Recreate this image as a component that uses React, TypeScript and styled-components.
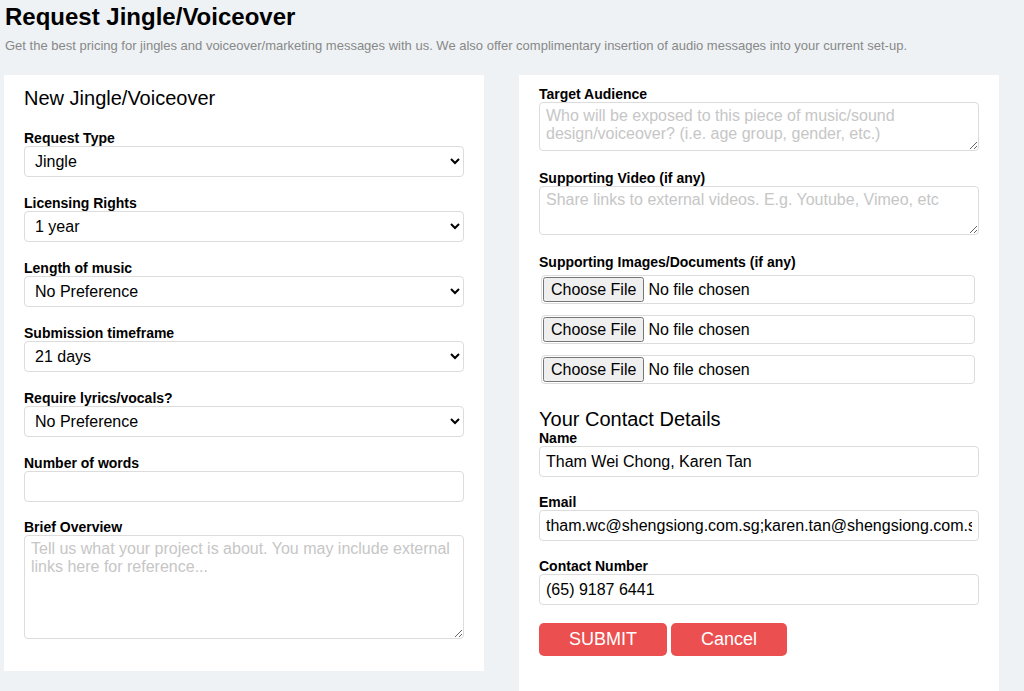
import React from 'react';
import styled, { createGlobalStyle } from 'styled-components';

const GlobalStyle = createGlobalStyle`
  html, body {
    margin: 0;
    padding: 0;
    background: #eef2f5;
    font-family: "Liberation Sans", Arial, sans-serif;
    color: #000;
  }
  * {
    box-sizing: border-box;
  }
`;

const Page = styled.div`
  padding: 3px 4px 0 4px;
  height: 691px;
  overflow: hidden;
`;

const Title = styled.h1`
  margin: 0 0 0 1px;
  font-size: 24px;
  line-height: 27px;
  font-weight: bold;
`;

const Subtitle = styled.p`
  margin: 8px 0 22px 1px;
  font-size: 13px;
  line-height: 15px;
  color: #888;
`;

const Columns = styled.div`
  display: grid;
  grid-template-columns: 480px 480px;
  column-gap: 35px;
  align-items: start;
`;

const Card = styled.section<{ $tall?: boolean }>`
  background: #fff;
  padding: 12px 20px ${({ $tall }) => ($tall ? '60px' : '14px')} 20px;
`;

const CardHeading = styled.h2<{ $gap?: number }>`
  margin: 0 0 ${({ $gap }) => $gap ?? 0}px 0;
  font-size: 20px;
  line-height: 23px;
  font-weight: normal;
`;

const Label = styled.label`
  display: block;
  font-size: 14px;
  line-height: 15px;
  font-weight: bold;
`;

const fieldBase = `
  display: block;
  width: 100%;
  font-family: "Liberation Sans", Arial, sans-serif;
  font-size: 16px;
  color: #000;
  background: #fff;
  border: 1px solid #dcdcdc;
  border-radius: 4px;
  outline: none;
`;

const Select = styled.select`
  ${fieldBase}
  height: 31px;
  padding: 0 6px;
  margin-bottom: 19px;
`;

const TextInput = styled.input`
  ${fieldBase}
  height: 31px;
  padding: 0 6px;
  margin-bottom: 18px;
`;

const TextArea = styled.textarea<{ $rows: number; $after?: number }>`
  ${fieldBase}
  height: ${({ $rows }) => $rows}px;
  padding: 4px 6px;
  line-height: 18px;
  margin: 0 0 ${({ $after }) => $after ?? 20}px 0;
  resize: vertical;

  &::placeholder {
    color: #c6c6c6;
  }
`;

const FileInput = styled.input`
  display: block;
  width: calc(100% - 6px);
  height: 29px;
  margin: 0 0 11px 2px;
  padding: 1px 1px;
  font-family: "Liberation Sans", Arial, sans-serif;
  font-size: 16px;
  border: 1px solid #dcdcdc;
  border-radius: 4px;
  background: #fff;

  &::file-selector-button {
    font-family: "Liberation Sans", Arial, sans-serif;
    font-size: 16px;
    height: 25px;
    padding: 0 6px;
    margin-right: 4px;
  }
`;

const FileGroup = styled.div`
  padding-top: 5px;
  margin-bottom: 24px;
`;

const Buttons = styled.div`
  display: flex;
  gap: 4px;
`;

const ActionButton = styled.button`
  height: 33px;
  padding: 0 30px;
  font-family: "Liberation Sans", Arial, sans-serif;
  font-size: 18px;
  color: #fff;
  background: #eb4f4f;
  border: none;
  border-radius: 5px;
  cursor: pointer;
`;

const selects = [
  { label: 'Request Type', value: 'Jingle', options: ['Jingle', 'Voiceover', 'Sound Design'] },
  { label: 'Licensing Rights', value: '1 year', options: ['1 year', '2 years', 'Perpetual'] },
  { label: 'Length of music', value: 'No Preference', options: ['No Preference', '15 seconds', '30 seconds', '60 seconds'] },
  { label: 'Submission timeframe', value: '21 days', options: ['7 days', '14 days', '21 days'] },
  { label: 'Require lyrics/vocals?', value: 'No Preference', options: ['No Preference', 'Yes', 'No'] },
];

export default function App() {
  return (
    <>
      <GlobalStyle />
      <Page>
        <Title>Request Jingle/Voiceover</Title>
        <Subtitle>
          Get the best pricing for jingles and voiceover/marketing messages with us. We also offer
          complimentary insertion of audio messages into your current set-up.
        </Subtitle>
        <Columns>
          <Card>
            <CardHeading $gap={21}>New Jingle/Voiceover</CardHeading>
            {selects.map((s) => (
              <div key={s.label}>
                <Label>{s.label}</Label>
                <Select defaultValue={s.value}>
                  {s.options.map((o) => (
                    <option key={o}>{o}</option>
                  ))}
                </Select>
              </div>
            ))}
            <Label>Number of words</Label>
            <TextInput type="text" />
            <Label>Brief Overview</Label>
            <TextArea
              $rows={104}
              $after={18}
              placeholder="Tell us what your project is about. You may include external links here for reference..."
            />
          </Card>
          <Card $tall>
            <Label>Target Audience</Label>
            <TextArea
              $rows={49}
              placeholder="Who will be exposed to this piece of music/sound design/voiceover? (i.e. age group, gender, etc.)"
            />
            <Label>Supporting Video (if any)</Label>
            <TextArea
              $rows={49}
              placeholder="Share links to external videos. E.g. Youtube, Vimeo, etc"
            />
            <Label>Supporting Images/Documents (if any)</Label>
            <FileGroup>
              <FileInput type="file" />
              <FileInput type="file" />
              <FileInput type="file" />
            </FileGroup>
            <CardHeading>Your Contact Details</CardHeading>
            <Label>Name</Label>
            <TextInput type="text" defaultValue="Tham Wei Chong, Karen Tan" />
            <Label>Email</Label>
            <TextInput
              type="text"
              defaultValue="tham.wc@shengsiong.com.sg;karen.tan@shengsiong.com.sg"
            />
            <Label>Contact Number</Label>
            <TextInput type="text" defaultValue="(65) 9187 6441" />
            <Buttons>
              <ActionButton type="submit">SUBMIT</ActionButton>
              <ActionButton type="button">Cancel</ActionButton>
            </Buttons>
          </Card>
        </Columns>
      </Page>
    </>
  );
}
